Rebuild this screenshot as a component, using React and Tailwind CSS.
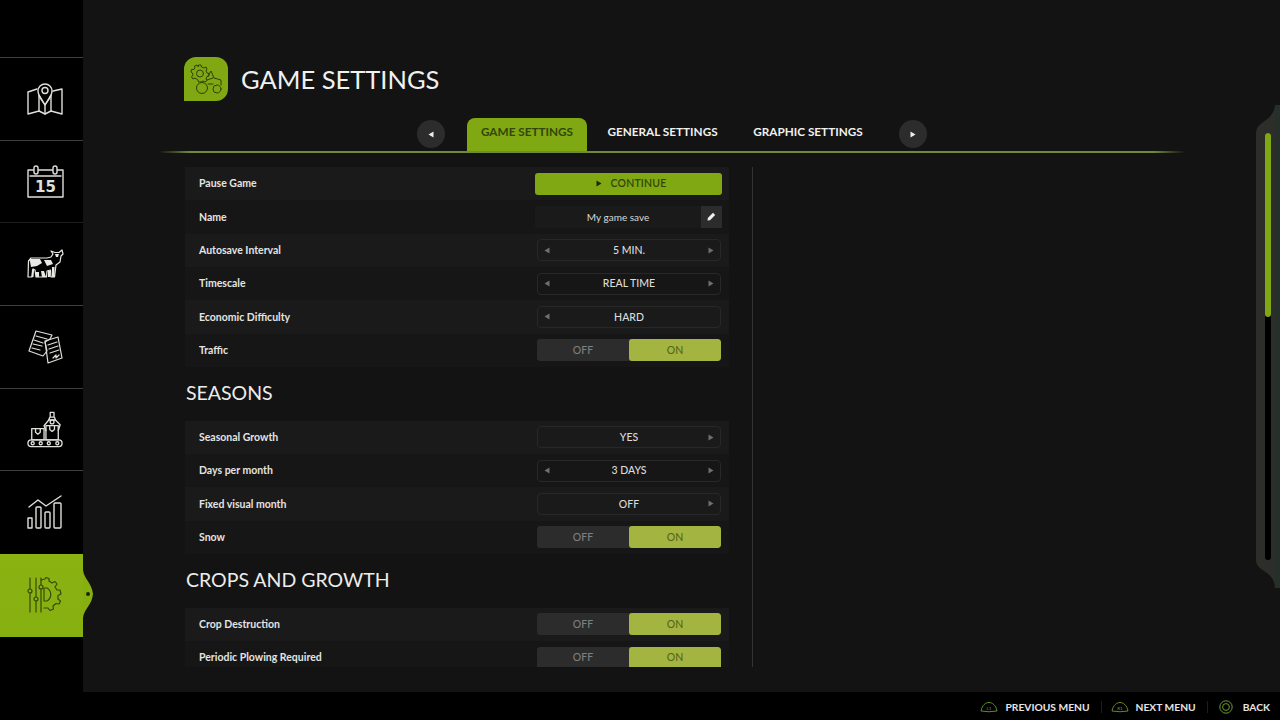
import React from "react";

const S = { fill: "none", stroke: "currentColor", strokeWidth: 1.4, strokeLinejoin: "round", strokeLinecap: "round" };

const MapIcon = () => (
  <svg width="36" height="33" viewBox="0 0 36 33" {...S} className="text-[#dfe0dc]">
    <path d="M1 10 L10 7 M1 10 V32 L12 29 L18 32 L24 29 L35 32 V7 L26 9" />
    <path d="M12 29 V13 L18 23 L24 13 V29 M18 23 V32" />
    <path d="M18 23 C14 17 11 14 11 9 A7 7 0 0 1 25 9 C25 14 22 17 18 23 Z" />
    <circle cx="18" cy="8.5" r="3" />
  </svg>
);
const CalIcon = () => (
  <svg width="37" height="33" viewBox="0 0 37 33" {...S} className="text-[#dfe0dc]">
    <rect x="1" y="5" width="35" height="27" />
    <path d="M3 11 H34" />
    <rect x="7" y="1" width="4" height="8" rx="2" fill="#000" />
    <rect x="26" y="1" width="4" height="8" rx="2" fill="#000" />
    <text x="18.5" y="27" textAnchor="middle" fontSize="15" fontWeight="700" fill="currentColor" stroke="none" fontFamily="'DejaVu Sans', sans-serif">15</text>
  </svg>
);
const CowIcon = () => (
  <svg width="38" height="30" viewBox="0 0 38 30" className="text-[#e8e8e4]">
    <path fill="none" stroke="currentColor" strokeWidth="1.2" strokeLinejoin="round" d="M2 28 L2.5 12 L5 9 H21 L25 8 L27 5 L25 2 L29 3.5 H33 L36 1 L37 5 L35 7 L34 13 L30 16 L28.5 28 H25 L24.5 21 L21 22 L20.5 28 H10 L9 21 L7 20 L6 28 Z" />
    <path fill="currentColor" d="M3.5 10 H14 L16 14 L11 17 L5 18 Z M18 11 H25 L27 15 L21 17 Z M6 20 L8 21 L7.5 28 H5.5 Z M10 23 H13 V28 H10 Z M15 22 H18 L20 28 H16 Z M22 22 H24.5 V28 H22 Z M26 18 H28.5 V28 H26 Z M29 5 L33 5 L32 8 L30 8 Z" />
  </svg>
);
const DocsIcon = () => (
  <svg width="35" height="34" viewBox="0 0 35 34" {...S} strokeWidth="1.2" className="text-[#dfe0dc]">
    <path d="M8 1 L24 5 L22 9 L17 12 L19 21 L15 26 L1 21 Z" />
    <path d="M8 6 L19 9 M6 10 L15 13 M5 14 L14 16 M4 18 L12 20" />
    <path d="M17 11 L30 7 L34 28 L20 33 Z" />
    <path d="M20 15 L29 12 M21 19 L30 16 M22 23 L31 20 M25 28 L28 25 L28 28 L31 25" />
  </svg>
);
const FactoryIcon = () => (
  <svg width="36" height="37" viewBox="0 0 38 38" {...S} strokeWidth="1.4" className="text-[#dfe0dc]">
    <rect x="1" y="30" width="36" height="7" rx="3.5" />
    <circle cx="6" cy="33.5" r="1.6" /><circle cx="14.5" cy="33.5" r="1.6" /><circle cx="23" cy="33.5" r="1.6" /><circle cx="32" cy="33.5" r="1.6" />
    <rect x="5" y="18" width="13" height="12" />
    <path d="M9 18 V22 L11.5 24 L14 22 V18" />
    <rect x="20" y="15" width="13" height="15" />
    <path d="M24 15 V19 L26.5 21 L29 19 V15" />
    <path d="M24.5 1 H28.5 V6 H24.5 Z M24 6 H29 L30 9 H23 Z" />
    <path d="M23 9 L18 15 L20 20 M30 9 L35 14 L33 20" />
    <circle cx="26.5" cy="11" r="2" />
  </svg>
);
const ChartIcon = () => (
  <svg width="36" height="34" viewBox="0 0 36 34" {...S} className="text-[#dfe0dc]">
    <rect x="1" y="23" width="4" height="10" />
    <rect x="9" y="12" width="5" height="21" rx="1" />
    <rect x="18" y="17" width="5" height="16" rx="1" />
    <rect x="27" y="8" width="7" height="25" rx="1" />
    <path d="M2 12 L11 5 L19 11 L34 1" />
  </svg>
);
const GearIcon = () => (
  <svg width="36" height="36" viewBox="0 0 36 36" {...S} strokeWidth="1.2" className="text-[#38490a]">
    <path d="M3 1 V12 M3 16 V35 M9 1 V20 M9 24 V35 M14 1 V8 M14 12 V35" />
    <circle cx="3" cy="14" r="2" /><circle cx="9" cy="22" r="2" /><circle cx="14" cy="10" r="2" />
    <path d="M14 3 L18 2 L19 0.5 L22 1.5 L22 4 L25 6 L28 4.5 L30 7 L28 10 L30 13 L33 13 L34 17 L31 18.5 L31 22 L33.5 24 L32 27 L29 26.5 L26 29 L26.5 32 L23 33.5 L21 31 L17 31" />
    <path d="M17 11 H20 A7.5 7.5 0 0 1 20 24 H17 Z" />
  </svg>
);

const TractorIcon = () => (
  <svg width="32" height="30" viewBox="0 0 32 30" {...S} strokeWidth="1" className="text-[#2f4206]">
    <path d="M9 1 L11 1 L11.5 3 L14 4 L16 3 L17 5 L16 7 L17 9 L19 9.5 L19 12 L17 12.5 L16 15 L17 16.5 L15 18 L13 17 L11 18 L8.5 18 L8 16 L5 14 L3 15 L1.5 13 L3 11 L2.5 9 L1 8 L1.5 5.5 L4 5.5 L5 3.5 L4.5 2 L7 1 L8 2.5 Z" />
    <circle cx="10" cy="9.5" r="3.5" />
    <circle cx="12" cy="24" r="5.5" />
    <circle cx="27" cy="25" r="4" />
    <path d="M18 12 L21 7 L24 14 L31 16 V21 M18 20 H23 M17 16 L23 14" />
  </svg>
);

const Tri = ({ dir, className }) => (
  <svg width="6" height="7" viewBox="0 0 6 7" fill="currentColor" className={className}>
    <path d={dir === "l" ? "M5.5 0.5 V6.5 L0.5 3.5 Z" : "M0.5 0.5 V6.5 L5.5 3.5 Z"} />
  </svg>
);

const Row = ({ label, odd, children }) => (
  <div className={`flex h-[33.34px] shrink-0 items-center justify-between pl-[14px] pr-[8px] ${odd ? "bg-[#1a1a1a]" : "bg-[#161616]"}`}>
    <span className="pt-px text-[10.5px] font-bold text-[#e4e4e2]">{label}</span>
    {children}
  </div>
);

const Select = ({ value, left = true, right = true }) => (
  <div className="flex h-[22px] w-[184px] items-center justify-between rounded-[4px] border border-[#282828] px-[6px]">
    <span className="flex w-[6px] text-[#6f6f6f]">{left && <Tri dir="l" />}</span>
    <span className="pt-px text-[10.5px] font-medium text-[#dcdcda]">{value}</span>
    <span className="flex w-[6px] text-[#6f6f6f]">{right && <Tri dir="r" />}</span>
  </div>
);

const Toggle = () => (
  <div className="flex h-[22px] w-[184px] overflow-hidden rounded-[3px] bg-[#2c2c2c] text-[10.5px] font-medium">
    <span className="flex w-[92px] items-center justify-center pt-px text-[#7f7f7f]">OFF</span>
    <span className="flex w-[92px] items-center justify-center rounded-[3px] bg-[#a3b540] pt-px text-[#56651a]">ON</span>
  </div>
);

const Heading = ({ children }) => (
  <div className="flex h-[53.66px] shrink-0 items-center pb-[1.5px] pl-px text-[19.5px] font-normal text-[#ececea]">{children}</div>
);

const NavItem = ({ children, active, line = "border-[#3e3e3e]" }) => (
  <div className={`relative flex h-[82.67px] shrink-0 items-center justify-center pl-[7px] ${active ? "bg-gradient-to-b from-[#8ab312] to-[#86af10]" : `border-b ${line}`}`}>
    {children}
    {active && (
      <svg width="11" height="48" viewBox="0 0 11 48" className="absolute left-[83px] top-[16px]">
        <path d="M0 0 C1 9 9 13 10 24 C9 35 1 39 0 48 Z" fill="#86af10" />
        <circle cx="5" cy="24" r="2" fill="#1c2606" />
      </svg>
    )}
  </div>
);

const Round = ({ dir }) => (
  <div className="flex h-[28px] w-[28px] items-center justify-center rounded-full bg-[#2c2c2c] text-[#eee]">
    <Tri dir={dir} />
  </div>
);

const Hint = ({ children, label, gap }) => (
  <div className={`flex items-center ${gap}`}>
    {children}
    <span className="pt-px text-[10.25px] font-bold text-[#e6e6e4]">{label}</span>
  </div>
);

const Shoulder = ({ t }) => (
  <svg width="18" height="18" viewBox="0 0 18 12" className="text-[#6f9a2c]" fill="none" stroke="currentColor" strokeWidth="0.9">
    <path d="M1 10 C2 4 6 1.5 9 1.5 C12 1.5 16 4 17 10 Q9 11.5 1 10 Z" />
    <text x="9" y="8.5" textAnchor="middle" fontSize="4.5" fill="currentColor" stroke="none">{t}</text>
  </svg>
);

export default function App() {
  return (
    <div className="flex h-[720px] w-[1280px] flex-col overflow-hidden bg-[#131313] font-['Lato','Liberation_Sans',sans-serif]">
      <div className="flex h-[692px] shrink-0">
        <aside className="flex w-[83px] shrink-0 flex-col bg-black">
          <div className="h-[58px] shrink-0 border-b border-[#3e3e3e]" />
          <NavItem><MapIcon /></NavItem>
          <NavItem line="border-[#1f1f1f]"><CalIcon /></NavItem>
          <NavItem><CowIcon /></NavItem>
          <NavItem><DocsIcon /></NavItem>
          <NavItem><FactoryIcon /></NavItem>
          <NavItem line="border-black"><ChartIcon /></NavItem>
          <NavItem active><GearIcon /></NavItem>
        </aside>

        <main className="flex w-[1173px] shrink-0 flex-col pt-[57px]">
          <div className="ml-[101px] flex h-[44px] items-center gap-[13px]">
            <div className="flex h-[44px] w-[44px] items-center justify-center rounded-[12px] rounded-bl-none bg-[#7fa812]">
              <TractorIcon />
            </div>
            <h1 className="text-[25.5px] font-normal text-[#f0f0ee]">GAME SETTINGS</h1>
          </div>

          <div className="mt-[17px] ml-[77px] w-[1024px] h-[35px] flex items-center border-b-2 border-[#6f8a3c] [border-image:linear-gradient(90deg,transparent,#6f8a3c_3%,#6f8a3c_97%,transparent)_1]">
            <div className="ml-[257px] flex h-[33px] items-end">
              <div className="mb-[3px] mr-[22px]"><Round dir="l" /></div>
              <div className="flex h-[33px] w-[120px] items-start justify-center rounded-t-[8px] bg-[#7fa812] pt-[5px] text-[11.75px] font-bold text-[#33450a]">GAME SETTINGS</div>
              <div className="flex h-[33px] w-[151px] justify-center pt-[5px] text-[11.75px] font-bold text-[#f0f0ee]">GENERAL SETTINGS</div>
              <div className="flex h-[33px] w-[140px] justify-center pt-[5px] text-[11.75px] font-bold text-[#f0f0ee]">GRAPHIC SETTINGS</div>
              <div className="mb-[3px] ml-[21px]"><Round dir="r" /></div>
            </div>
          </div>

          <div className="ml-[102px] mt-[14px] flex h-[500px]">
            <div className="flex h-full w-[544px] flex-col overflow-hidden">
              <Row label="Pause Game" odd>
                <button className="-mr-px flex h-[22px] w-[187px] items-center justify-center gap-[8px] rounded-[3px] bg-[#7fa812] pl-[6px] text-[10.5px] font-semibold tracking-[0.2px] text-[#33450a]">
                  <Tri dir="r" className="text-[#1d2806]" /><span className="pt-px">CONTINUE</span>
                </button>
              </Row>
              <Row label="Name">
                <div className="-mr-px flex h-[22px] w-[187px] items-center justify-between bg-[#1a1a1a]">
                  <span className="w-[167px] pt-px text-center text-[10px] text-[#d8d8d6]">My game save</span>
                  <div className="flex h-[22px] w-[21px] items-center justify-center bg-[#2c2c2c] text-[#eee]">
                    <svg width="9" height="9" viewBox="0 0 9 9" fill="currentColor"><path d="M6 0.8 L8.2 3 L3 8.2 L0.5 8.5 L0.8 6 Z" /></svg>
                  </div>
                </div>
              </Row>
              <Row label="Autosave Interval" odd><Select value="5 MIN." /></Row>
              <Row label="Timescale"><Select value="REAL TIME" /></Row>
              <Row label="Economic Difficulty" odd><Select value="HARD" right={false} /></Row>
              <Row label="Traffic"><Toggle /></Row>
              <Heading>SEASONS</Heading>
              <Row label="Seasonal Growth" odd><Select value="YES" left={false} /></Row>
              <Row label="Days per month"><Select value="3 DAYS" /></Row>
              <Row label="Fixed visual month" odd><Select value="OFF" left={false} /></Row>
              <Row label="Snow"><Toggle /></Row>
              <Heading>CROPS AND GROWTH</Heading>
              <Row label="Crop Destruction" odd><Toggle /></Row>
              <Row label="Periodic Plowing Required"><Toggle /></Row>
            </div>
            <div className="ml-[23px] h-full w-px bg-[#333]" />
          </div>
        </main>

        <div className="flex w-[24px] shrink-0 flex-col pt-[105px]">
          <svg width="24" height="28" viewBox="0 0 24 28" className="block shrink-0">
            <path d="M0 28 C0 16 18 16 19 0 H24 V28 Z" fill="#2d2e29" />
            <path d="M19 0 H24 V28 H19 Z" fill="#25302a" />
          </svg>
          <div className="flex h-[427px] shrink-0 bg-[#2d2e29]">
            <div className="ml-[9px] flex h-full w-[6px] flex-col rounded-full bg-black">
              <div className="h-[184px] rounded-full bg-[#7fa812]" />
            </div>
            <div className="ml-[4px] h-full w-[5px] bg-[#25302a]" />
          </div>
          <svg width="24" height="28" viewBox="0 0 24 28" className="block shrink-0">
            <path d="M0 0 C0 12 18 10 19 28 H24 V0 Z" fill="#2d2e29" />
            <path d="M19 0 H24 V28 H19 Z" fill="#25302a" />
          </svg>
        </div>
      </div>

      <footer className="flex h-[28px] shrink-0 items-center justify-end gap-[11px] bg-black pr-[10px] pt-[2px]">
        <Hint label="PREVIOUS MENU" gap="gap-[7px]"><Shoulder t="L1" /></Hint>
        <div className="-mr-[2px] h-[12px] w-px bg-[#1e1e1e]" />
        <Hint label="NEXT MENU" gap="gap-[7px]"><Shoulder t="R1" /></Hint>
        <div className="h-[12px] w-px bg-[#1e1e1e]" />
        <Hint label="BACK" gap="gap-[10px]">
          <svg width="14" height="14" viewBox="0 0 14 14" fill="none" stroke="#6f9a2c" strokeWidth="1"><circle cx="7" cy="7" r="6.2" /><circle cx="7" cy="7" r="3.4" /></svg>
        </Hint>
      </footer>
    </div>
  );
}
